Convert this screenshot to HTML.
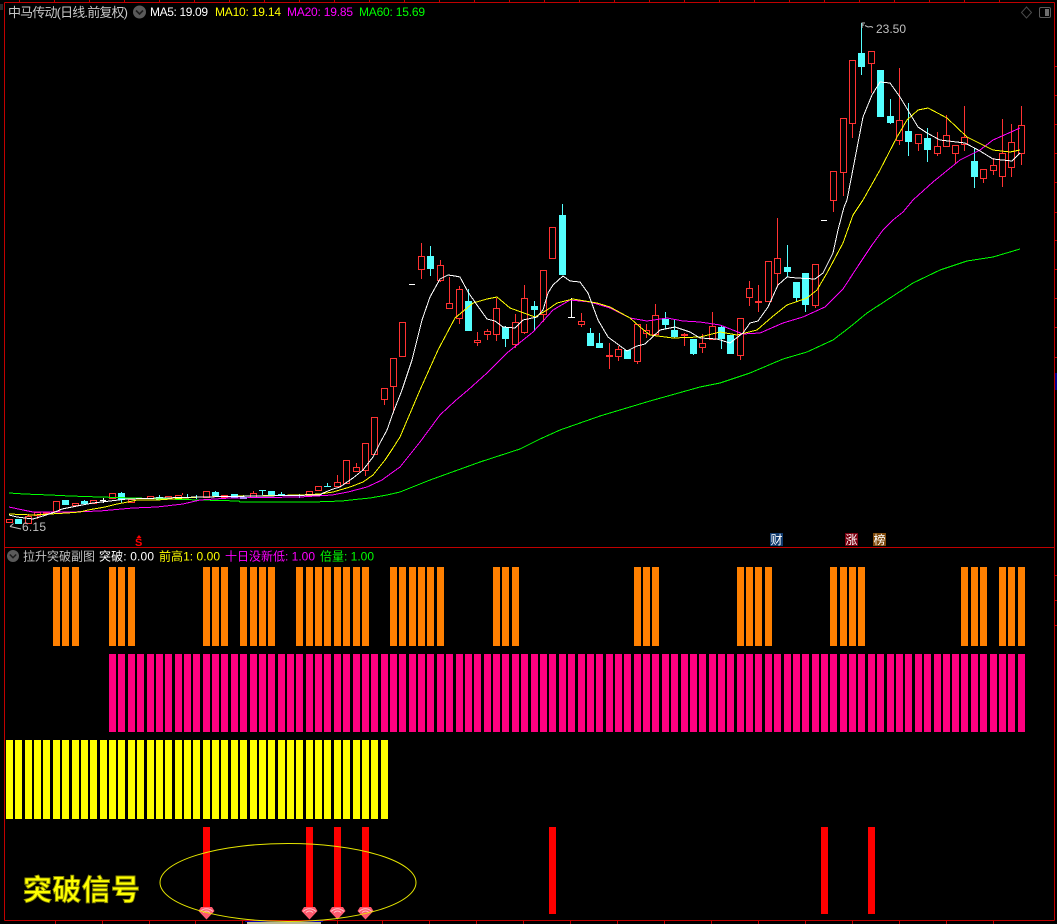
<!DOCTYPE html>
<html><head><meta charset="utf-8"><title>拉升突破副图</title>
<style>
html,body{margin:0;padding:0;background:#000;width:1057px;height:924px;overflow:hidden}
svg{display:block}
text{font-family:"Liberation Sans","Noto Sans CJK SC",sans-serif;font-size:12px}
.cn{font-family:"Liberation Sans","Noto Sans CJK SC",sans-serif}
</style></head><body>
<svg width="1057" height="924" viewBox="0 0 1057 924" xmlns="http://www.w3.org/2000/svg">
<rect width="1057" height="924" fill="#000"/>
<!-- frame -->
<g fill="none" stroke="#c00000" shape-rendering="crispEdges">
<path d="M4.5 2.5V920.5M1054.5 2.5V920.5M4.5 2.5H1054.5M4.5 547.5H1054.5M4.5 920.5H1054.5"/>
<path d="M789.5 0V2M824.5 0V2M859.5 0V2M894.5 0V2M929.5 0V2M964.5 0V2M999.5 0V2M754.5 0V2M719.5 0V2M684.5 0V2M649.5 0V2M614.5 0V2M579.5 0V2M544.5 0V2M509.5 0V2M474.5 0V2M439.5 0V2M404.5 0V2M369.5 0V2M334.5 0V2M299.5 0V2M264.5 0V2M229.5 0V2M194.5 0V2M159.5 0V2M124.5 0V2M89.5 0V2M54.5 0V2M19.5 0V2"/>
<path d="M1055 66.5H1057M1055 95.5H1057M1055 124.5H1057M1055 153.5H1057M1055 182.5H1057M1055 212.5H1057M1055 240.5H1057M1055 269.5H1057M1055 298.5H1057M1055 327.5H1057M1055 357.5H1057M1055 575.5H1057M1055 600.5H1057M1055 625.5H1057"/>
<path d="M55.5 921V924M102.5 921V924M149.5 921V924M195.5 921V924M242.5 921V924M337.5 921V924M382.5 921V924M429.5 921V924M476.5 921V924M523.5 921V924M570.5 921V924M617.5 921V924M664.5 921V924M711.5 921V924M758.5 921V924M805.5 921V924M852.5 921V924M899.5 921V924M946.5 921V924M993.5 921V924"/>
</g>
<rect x="0" y="4" width="3" height="6" fill="#2a2a2a"/>
<rect x="1055" y="373" width="2" height="17" fill="#00008c"/>
<rect x="245" y="921" width="78" height="1" fill="#0000b0"/>
<rect x="247" y="922" width="74" height="2" fill="#b8b890"/>

<!-- candle wicks -->
<path fill="none" stroke="#ff3232" shape-rendering="crispEdges" d="M37.5 512V519M28.5 514V523M182.5 493V495M253.5 491V493M309.5 495V497M337.5 475V482M356.5 463V467M365.5 470V476M384.5 399V405M393.5 386V413M421.5 243V279M440.5 260V282M449.5 277V303M459.5 286V324M477.5 332V346M487.5 329V340M496.5 298V341M515.5 314V348M524.5 285V334M543.5 314V322M552.5 258V259M581.5 313V327M609.5 343V369M618.5 346V361M637.5 361V364M646.5 324V338M655.5 304V315M684.5 333V346M702.5 334V353M712.5 312V326M740.5 355V360M749.5 281V306M758.5 285V312M777.5 218V287M815.5 305V308M833.5 200V212M843.5 172V196M852.5 123V138M871.5 63V93M899.5 68V145M918.5 143V151M937.5 132V156M946.5 115V147M955.5 153V164M964.5 106V151M983.5 178V183M993.5 158V175M1002.5 119V187M1011.5 124V177M1021.5 106V165"/>
<path fill="none" stroke="#54ffff" shape-rendering="crispEdges" d="M84.5 500V504M121.5 492V503M159.5 495V499M187.5 494V498M196.5 495V499M215.5 491V495M243.5 495V499M262.5 490V495M281.5 492V496M299.5 494V498M327.5 483V487M430.5 246V276M468.5 289V301M505.5 326V347M534.5 301V330M562.5 204V215M590.5 328V346M599.5 333V348M627.5 350V359M665.5 312V329M674.5 319V338M693.5 353V355M721.5 326V349M730.5 353V354M787.5 245V277M796.5 297V301M805.5 304V312M861.5 23V75M890.5 99V124M908.5 103V156M927.5 128V162M974.5 148V188"/>
<!-- red hollow bodies -->
<path fill="#000" stroke="#ff3232" shape-rendering="crispEdges" d="M6.5 519.5h6v3h-6zM25.5 516.5h6v7h-6zM34.5 512.5h6v3h-6zM43.5 512.5h6v1h-6zM53.5 501.5h6v10h-6zM72.5 503.5h6v2h-6zM90.5 500.5h6v3h-6zM109.5 493.5h6v5h-6zM128.5 499.5h6v3h-6zM147.5 496.5h6v2h-6zM165.5 496.5h6v2h-6zM175.5 495.5h6v2h-6zM203.5 491.5h6v6h-6zM221.5 495.5h6v2h-6zM250.5 493.5h6v4h-6zM306.5 491.5h6v4h-6zM315.5 486.5h6v4h-6zM334.5 482.5h6v4h-6zM343.5 460.5h6v23h-6zM353.5 467.5h6v4h-6zM362.5 443.5h6v27h-6zM371.5 417.5h6v37h-6zM381.5 388.5h6v11h-6zM390.5 358.5h6v28h-6zM399.5 322.5h6v34h-6zM418.5 256.5h6v13h-6zM437.5 265.5h6v15h-6zM446.5 303.5h6v5h-6zM456.5 289.5h6v29h-6zM474.5 340.5h6v2h-6zM484.5 331.5h6v3h-6zM493.5 308.5h6v26h-6zM512.5 322.5h6v22h-6zM521.5 298.5h6v34h-6zM540.5 270.5h6v44h-6zM549.5 227.5h6v31h-6zM578.5 321.5h6v3h-6zM606.5 355.5h6v1h-6zM615.5 349.5h6v7h-6zM634.5 324.5h6v37h-6zM643.5 330.5h6v3h-6zM652.5 315.5h6v19h-6zM681.5 334.5h6v1h-6zM699.5 343.5h6v4h-6zM709.5 326.5h6v13h-6zM737.5 318.5h6v37h-6zM746.5 288.5h6v9h-6zM755.5 301.5h6v1h-6zM765.5 261.5h6v40h-6zM774.5 258.5h6v15h-6zM812.5 264.5h6v41h-6zM830.5 171.5h6v29h-6zM840.5 118.5h6v54h-6zM849.5 60.5h6v63h-6zM868.5 51.5h6v12h-6zM896.5 120.5h6v20h-6zM915.5 134.5h6v9h-6zM934.5 146.5h6v7h-6zM943.5 135.5h6v11h-6zM952.5 145.5h6v8h-6zM961.5 137.5h6v7h-6zM980.5 169.5h6v9h-6zM990.5 165.5h6v5h-6zM999.5 153.5h6v23h-6zM1008.5 142.5h6v25h-6zM1018.5 125.5h6v28h-6z"/>
<!-- cyan bodies -->
<path fill="#54ffff" shape-rendering="crispEdges" d="M15 519h7v5h-7zM62 500h7v5h-7zM81 501h7v3h-7zM118 493h7v7h-7zM156 497h7v3h-7zM212 492h7v4h-7zM231 494h7v4h-7zM240 497h7v2h-7zM259 490h7v1h-7zM268 491h7v4h-7zM278 494h7v2h-7zM324 486h7v1h-7zM427 256h7v13h-7zM465 301h7v30h-7zM502 327h7v12h-7zM531 306h7v4h-7zM559 215h7v60h-7zM587 333h7v13h-7zM596 343h7v5h-7zM624 350h7v9h-7zM662 319h7v6h-7zM671 330h7v7h-7zM690 339h7v15h-7zM718 327h7v12h-7zM727 335h7v19h-7zM784 267h7v5h-7zM793 282h7v16h-7zM802 273h7v32h-7zM858 53h7v14h-7zM877 70h7v47h-7zM887 116h7v7h-7zM905 131h7v11h-7zM924 138h7v12h-7zM971 161h7v16h-7z"/>
<!-- white doji -->
<path fill="none" stroke="#fff" shape-rendering="crispEdges" d="M571.5 298V317M568 317.5H575M409 284.5H415M821 220.5H827M103.5 498V503M100 500.5H106"/>
<!-- MA lines -->
<g fill="none" shape-rendering="crispEdges">
<polyline stroke="#00ff00" points="9,493 24,494 50,495 70,496 100,497 200,500 239,501 240,502 313,502 342,501 360,499 370,498 387,495 400,492 430,480 480,462 520,449 540,439 560,430 600,416 650,401 700,387 720,383 750,373 783,359 807,352 833,340 850,327 867,313 890,298 913,283 940,270 967,261 993,257 1020,249"/>
<polyline stroke="#ff00ff" points="9,507 23,510 33,512 70,512 100,511 133,508 157,507 183,504 200,500 230,498 300,497 332,495 348,492 367,487 382,480 393,472 400,467 420,442 440,415 455,401 468,390 487,373 507,353 533,332 553,310 570,300 590,302 610,308 630,318 647,321 667,318 683,321 700,322 720,325 743,334 760,333 783,323 803,317 825,307 843,289 860,263 872,245 883,230 893,220 903,212 913,200 933,182 960,160 980,150 993,140 1020,128"/>
<polyline stroke="#ffff00" points="9,514 33,515 50,514 67,513 80,512 88,510 105,507 117,504 128,502 137,500 157,500 200,497 300,495 320,494 333,492 350,487 363,482 373,475 385,460 393,448 400,437 420,390 438,350 455,318 473,303 487,299 497,297 510,308 535,317 547,310 557,303 573,299 597,303 610,307 630,318 640,327 650,335 673,338 700,337 720,332 737,335 757,330 772,317 787,305 807,298 817,290 827,273 843,243 853,215 863,200 880,170 897,137 907,120 918,110 928,108 947,118 967,137 993,150 1010,152 1020,150"/>
<polyline stroke="#ffffff" points="9,515 17,517 33,519 43,516 55,512 62,509 72,507 82,505 93,503 110,501 127,499 200,497 320,495 323,493 333,489 340,487 353,478 363,470 373,457 380,443 387,430 393,413 402,390 412,360 422,320 430,297 440,279 448,275 455,276 460,277 468,292 477,305 487,319 495,321 503,327 515,328 523,320 537,317 543,310 548,293 553,285 563,276 570,281 580,282 588,293 598,320 608,337 627,351 637,346 645,344 660,330 675,327 690,332 700,338 717,339 730,343 743,333 750,323 758,321 768,307 778,285 787,277 797,278 815,279 823,273 833,253 838,230 844,207 847,200 863,117 872,95 880,82 890,83 900,97 918,127 927,133 940,140 965,143 980,151 993,159 1012,161 1020,153"/>
</g>
<!-- price labels -->
<text x="876" y="33" fill="#c0c0c0" textLength="30">23.50</text>
<path d="M862 28V23H865M862.5 25H864M865 25.5L868 27L871 26.5L873 27.5" fill="none" stroke="#c0c0c0" stroke-width="1"/>
<text x="22" y="531" fill="#c0c0c0" textLength="24">6.15</text>
<path d="M10 526.5L13.5 523.5M10 526.5L21 529" fill="none" stroke="#c0c0c0" stroke-width="1"/>

<!-- header -->
<text x="8" y="17" fill="#c8c8c8" font-size="13" style="font-size:13px" textLength="120">中马传动(日线.前复权)</text>
<circle cx="139.5" cy="12" r="6.5" fill="#5a5a5a"/>
<path d="M136 10.5L139.5 14L143 10.5" fill="none" stroke="#1c1c1c" stroke-width="1.6"/>
<text x="150" y="16" fill="#ffffff" textLength="58">MA5: 19.09</text>
<text x="215" y="16" fill="#ffff00" textLength="66">MA10: 19.14</text>
<text x="287" y="16" fill="#ff00ff" textLength="66">MA20: 19.85</text>
<text x="359" y="16" fill="#00ff00" textLength="66">MA60: 15.69</text>
<path d="M1026.500 7L1031.500 12.500L1026.500 18L1021.500 12.500Z" fill="none" stroke="#4a4a4a"/>
<rect x="1039.500" y="7.500" width="11" height="10" rx="1.500" fill="none" stroke="#5a5a5a"/>
<rect x="1045" y="9" width="4" height="7" fill="#6e6e6e"/>

<!-- tags -->
<path d="M139 535L141.500 538H136.500Z" fill="#ff0000"/>
<text x="135" y="546" fill="#ff0000" style="font-size:11px;font-weight:bold" textLength="8">S</text>
<rect x="770" y="533" width="13" height="13" fill="#0f3a6e"/>
<text x="770.500" y="544" fill="#fff" class="cn" style="font-size:12px">财</text>
<rect x="845" y="533" width="13" height="13" fill="#7a0010"/>
<text x="845.500" y="544" fill="#fff" class="cn" style="font-size:12px">涨</text>
<rect x="873" y="533" width="13" height="13" fill="#7f4a0c"/>
<text x="873.500" y="544" fill="#fff" class="cn" style="font-size:12px">榜</text>

<!-- sub header -->
<circle cx="13" cy="556" r="6" fill="#5a5a5a"/>
<path d="M9.800 554.500L13 557.700L16.200 554.500" fill="none" stroke="#1c1c1c" stroke-width="1.500"/>
<text x="23" y="560.500" fill="#c0c0c0" textLength="72">拉升突破副图</text>
<text x="99" y="560.500" fill="#ffffff" textLength="55">突破: 0.00</text>
<text x="159" y="560.500" fill="#ffff00" textLength="61">前高1: 0.00</text>
<text x="225" y="560.500" fill="#ff00ff" textLength="90">十日没新低: 1.00</text>
<text x="320" y="560.500" fill="#00ff00" textLength="54">倍量: 1.00</text>

<!-- orange -->
<path fill="#ff8000" shape-rendering="crispEdges" d="M53 567h7v79h-7zM62 567h7v79h-7zM72 567h7v79h-7zM109 567h7v79h-7zM118 567h7v79h-7zM128 567h7v79h-7zM203 567h7v79h-7zM212 567h7v79h-7zM221 567h7v79h-7zM240 567h7v79h-7zM250 567h7v79h-7zM259 567h7v79h-7zM268 567h7v79h-7zM296 567h7v79h-7zM306 567h7v79h-7zM315 567h7v79h-7zM324 567h7v79h-7zM334 567h7v79h-7zM343 567h7v79h-7zM353 567h7v79h-7zM362 567h7v79h-7zM390 567h7v79h-7zM399 567h7v79h-7zM409 567h7v79h-7zM418 567h7v79h-7zM427 567h7v79h-7zM437 567h7v79h-7zM493 567h7v79h-7zM502 567h7v79h-7zM512 567h7v79h-7zM634 567h7v79h-7zM643 567h7v79h-7zM652 567h7v79h-7zM737 567h7v79h-7zM746 567h7v79h-7zM755 567h7v79h-7zM765 567h7v79h-7zM830 567h7v79h-7zM840 567h7v79h-7zM849 567h7v79h-7zM858 567h7v79h-7zM961 567h7v79h-7zM971 567h7v79h-7zM980 567h7v79h-7zM999 567h7v79h-7zM1008 567h7v79h-7zM1018 567h7v79h-7z"/>
<!-- pink -->
<path fill="#ff0080" shape-rendering="crispEdges" d="M109 654h7v78h-7zM118 654h7v78h-7zM128 654h7v78h-7zM137 654h7v78h-7zM147 654h7v78h-7zM156 654h7v78h-7zM165 654h7v78h-7zM175 654h7v78h-7zM184 654h7v78h-7zM193 654h7v78h-7zM203 654h7v78h-7zM212 654h7v78h-7zM221 654h7v78h-7zM231 654h7v78h-7zM240 654h7v78h-7zM250 654h7v78h-7zM259 654h7v78h-7zM268 654h7v78h-7zM278 654h7v78h-7zM287 654h7v78h-7zM296 654h7v78h-7zM306 654h7v78h-7zM315 654h7v78h-7zM324 654h7v78h-7zM334 654h7v78h-7zM343 654h7v78h-7zM353 654h7v78h-7zM362 654h7v78h-7zM371 654h7v78h-7zM381 654h7v78h-7zM390 654h7v78h-7zM399 654h7v78h-7zM409 654h7v78h-7zM418 654h7v78h-7zM427 654h7v78h-7zM437 654h7v78h-7zM446 654h7v78h-7zM456 654h7v78h-7zM465 654h7v78h-7zM474 654h7v78h-7zM484 654h7v78h-7zM493 654h7v78h-7zM502 654h7v78h-7zM512 654h7v78h-7zM521 654h7v78h-7zM531 654h7v78h-7zM540 654h7v78h-7zM549 654h7v78h-7zM559 654h7v78h-7zM568 654h7v78h-7zM578 654h7v78h-7zM587 654h7v78h-7zM596 654h7v78h-7zM606 654h7v78h-7zM615 654h7v78h-7zM624 654h7v78h-7zM634 654h7v78h-7zM643 654h7v78h-7zM652 654h7v78h-7zM662 654h7v78h-7zM671 654h7v78h-7zM681 654h7v78h-7zM690 654h7v78h-7zM699 654h7v78h-7zM709 654h7v78h-7zM718 654h7v78h-7zM727 654h7v78h-7zM737 654h7v78h-7zM746 654h7v78h-7zM755 654h7v78h-7zM765 654h7v78h-7zM774 654h7v78h-7zM784 654h7v78h-7zM793 654h7v78h-7zM802 654h7v78h-7zM812 654h7v78h-7zM821 654h7v78h-7zM830 654h7v78h-7zM840 654h7v78h-7zM849 654h7v78h-7zM858 654h7v78h-7zM868 654h7v78h-7zM877 654h7v78h-7zM887 654h7v78h-7zM896 654h7v78h-7zM905 654h7v78h-7zM915 654h7v78h-7zM924 654h7v78h-7zM934 654h7v78h-7zM943 654h7v78h-7zM952 654h7v78h-7zM961 654h7v78h-7zM971 654h7v78h-7zM980 654h7v78h-7zM990 654h7v78h-7zM999 654h7v78h-7zM1008 654h7v78h-7zM1018 654h7v78h-7z"/>
<!-- yellow -->
<path fill="#ffff00" shape-rendering="crispEdges" d="M6 740h7v79h-7zM15 740h7v79h-7zM25 740h7v79h-7zM34 740h7v79h-7zM43 740h7v79h-7zM53 740h7v79h-7zM62 740h7v79h-7zM72 740h7v79h-7zM81 740h7v79h-7zM90 740h7v79h-7zM100 740h7v79h-7zM109 740h7v79h-7zM118 740h7v79h-7zM128 740h7v79h-7zM137 740h7v79h-7zM147 740h7v79h-7zM156 740h7v79h-7zM165 740h7v79h-7zM175 740h7v79h-7zM184 740h7v79h-7zM193 740h7v79h-7zM203 740h7v79h-7zM212 740h7v79h-7zM221 740h7v79h-7zM231 740h7v79h-7zM240 740h7v79h-7zM250 740h7v79h-7zM259 740h7v79h-7zM268 740h7v79h-7zM278 740h7v79h-7zM287 740h7v79h-7zM296 740h7v79h-7zM306 740h7v79h-7zM315 740h7v79h-7zM324 740h7v79h-7zM334 740h7v79h-7zM343 740h7v79h-7zM353 740h7v79h-7zM362 740h7v79h-7zM371 740h7v79h-7zM381 740h7v79h-7z"/>
<!-- red signal -->
<path fill="#ff0000" shape-rendering="crispEdges" d="M203 827h7v84h-7zM306 827h7v84h-7zM334 827h7v84h-7zM362 827h7v84h-7zM549 827h7v87h-7zM821 827h7v87h-7zM868 827h7v87h-7z"/>
<!-- gems -->
<g>
<path d="M201 907H212L214.500 911L206.500 919.500L198.500 911Z" fill="#ff5a6e"/><path d="M200 911.500Q206.500 906 213 911.500M203 912.500Q206.500 909.500 210 912.500" fill="none" stroke="#ffc0c8"/>
<path d="M304 907H315L317.500 911L309.500 919.500L301.500 911Z" fill="#ff5a6e"/><path d="M303 911.500Q309.500 906 316 911.500M306 912.500Q309.500 909.500 313 912.500" fill="none" stroke="#ffc0c8"/>
<path d="M332 907H343L345.500 911L337.500 919.500L329.500 911Z" fill="#ff5a6e"/><path d="M331 911.500Q337.500 906 344 911.500M334 912.500Q337.500 909.500 341 912.500" fill="none" stroke="#ffc0c8"/>
<path d="M360 907H371L373.500 911L365.500 919.500L357.500 911Z" fill="#ff5a6e"/><path d="M359 911.500Q365.500 906 372 911.500M362 912.500Q365.500 909.500 369 912.500" fill="none" stroke="#ffc0c8"/>
</g>
<ellipse cx="288" cy="882.500" rx="128" ry="39" fill="none" stroke="#e6e600" stroke-width="1"/>
<!-- big title -->
<text x="23" y="900" fill="#ffff00" class="cn" style="font-size:29px;font-weight:bold;font-family:'Liberation Sans','Noto Sans CJK SC',sans-serif" stroke="#8a8a00" stroke-width="0.9" textLength="117">突破信号</text>
</svg>
</body></html>
